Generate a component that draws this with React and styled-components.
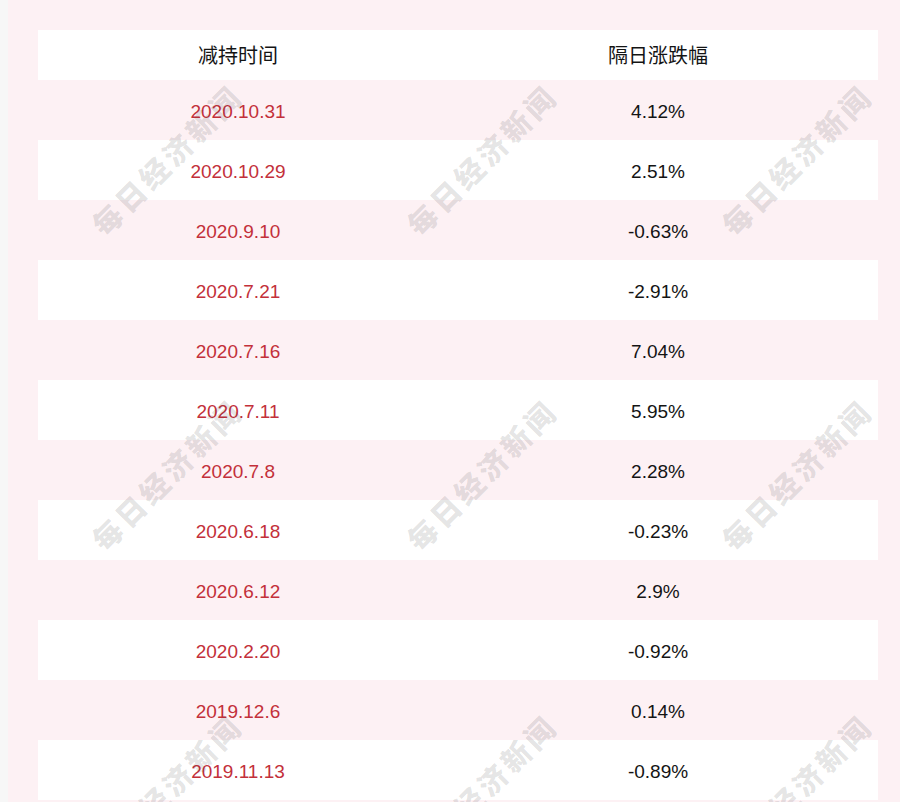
import React from "react";
import styled, { createGlobalStyle } from "styled-components";

const Global = createGlobalStyle`
  html, body { margin: 0; padding: 0; background: #f7f7f7; }
  body { font-family: "Liberation Sans", Arial, "Noto Sans CJK SC", sans-serif; overflow: hidden; }
`;

const Page = styled.div`
  padding-left: 8px;
  height: 802px;
  overflow: hidden;
`;

const Panel = styled.div`
  position: relative;
  background: #fdf1f4;
  padding: 30px 22px 0 30px;
  height: 772px;
  overflow: hidden;
`;

const Table = styled.div`
  display: flex;
  flex-direction: column;
`;

const Row = styled.div`
  display: grid;
  grid-template-columns: 400px 440px;
  height: ${(p) => (p.$header ? 50 : 60)}px;
  padding-top: ${(p) => (p.$header ? 0 : 2)}px;
  box-sizing: border-box;
  align-items: center;
  background: ${(p) => (p.$white ? "#ffffff" : "transparent")};
`;

const Cell = styled.div`
  text-align: center;
  font-size: ${(p) => (p.$header ? 20 : 19)}px;
  color: ${(p) => (p.$red ? "#c3303a" : "#141414")};
  font-family: ${(p) =>
    p.$header
      ? '"Noto Sans CJK SC", "Liberation Sans", sans-serif'
      : '"Liberation Sans", Arial, sans-serif'};
  line-height: 1;
`;

const Watermark = styled.div`
  position: absolute;
  left: ${(p) => p.$x}px;
  top: ${(p) => p.$y}px;
  transform: translate(-50%, -50%) rotate(-45deg);
  font-family: "Noto Sans CJK SC", sans-serif;
  font-weight: 900;
  font-size: 29px;
  letter-spacing: 4px;
  white-space: nowrap;
  color: rgba(60, 60, 60, 0.14);
  pointer-events: none;
`;

const rows = [
  ["2020.10.31", "4.12%"],
  ["2020.10.29", "2.51%"],
  ["2020.9.10", "-0.63%"],
  ["2020.7.21", "-2.91%"],
  ["2020.7.16", "7.04%"],
  ["2020.7.11", "5.95%"],
  ["2020.7.8", "2.28%"],
  ["2020.6.18", "-0.23%"],
  ["2020.6.12", "2.9%"],
  ["2020.2.20", "-0.92%"],
  ["2019.12.6", "0.14%"],
  ["2019.11.13", "-0.89%"],
];

const marks = [];
for (const y of [159, 474, 789]) {
  for (const x of [166, 481, 796]) marks.push([x - 8, y]);
}

export default function App() {
  return (
    <>
      <Global />
      <Page>
        <Panel>
          <Table>
            <Row $header $white>
              <Cell $header>减持时间</Cell>
              <Cell $header>隔日涨跌幅</Cell>
            </Row>
            {rows.map(([d, v], i) => (
              <Row key={d} $white={i % 2 === 1}>
                <Cell $red>{d}</Cell>
                <Cell>{v}</Cell>
              </Row>
            ))}
          </Table>
          {marks.map(([x, y]) => (
            <Watermark key={`${x}-${y}`} $x={x} $y={y}>
              每日经济新闻
            </Watermark>
          ))}
        </Panel>
      </Page>
    </>
  );
}
